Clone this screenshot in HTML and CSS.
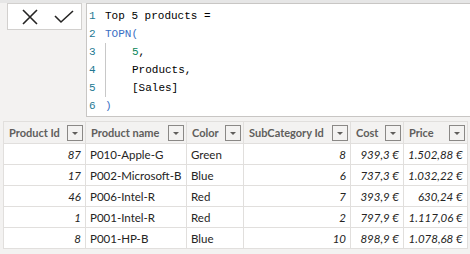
FILE: index.html
```html
<!DOCTYPE html>
<html>

<head>
    <title>TOPN query</title>
    <link rel="stylesheet" href="styles.css">
</head>

<body>
    <div class="top">
        <div class="buttons">
            <svg class="icon" width="16" height="16" viewBox="0 0 16 16">
                <path d="M1 1 L15 15 M15 1 L1 15" stroke="#252423" stroke-width="1.6" fill="none"/>
            </svg>
            <svg class="icon" width="20" height="14" viewBox="0 0 20 14">
                <path d="M1 6 L7 12 L19 1" stroke="#252423" stroke-width="1.6" fill="none"/>
            </svg>
        </div>
        <div class="editor">
            <div class="line"><span class="num">1</span><span>Top 5 products =</span></div>
            <div class="line"><span class="num">2</span><span class="fn">TOPN(</span></div>
            <div class="line"><span class="num">3</span><span class="guide"></span><span class="lit">5</span><span>,</span></div>
            <div class="line"><span class="num">4</span><span class="guide"></span><span>Products,</span></div>
            <div class="line"><span class="num">5</span><span class="guide"></span><span>[Sales]</span></div>
            <div class="line"><span class="num">6</span><span class="fn">)</span></div>
        </div>
    </div>

    <table class="grid">
        <thead>
            <tr>
                <th class="c1"><div class="head">Product Id<span class="drop"></span></div></th>
                <th class="c2"><div class="head">Product name<span class="drop"></span></div></th>
                <th class="c3"><div class="head">Color<span class="drop"></span></div></th>
                <th class="c4"><div class="head">SubCategory Id<span class="drop"></span></div></th>
                <th class="c5"><div class="head">Cost<span class="drop"></span></div></th>
                <th class="c6"><div class="head">Price<span class="drop"></span></div></th>
            </tr>
        </thead>
        <tbody>
            <tr>
                <td class="n">87</td><td>P010-Apple-G</td><td>Green</td>
                <td class="n">8</td><td class="n">939,3 €</td><td class="n">1.502,88 €</td>
            </tr>
            <tr>
                <td class="n">17</td><td>P002-Microsoft-B</td><td>Blue</td>
                <td class="n">6</td><td class="n">737,3 €</td><td class="n">1.032,22 €</td>
            </tr>
            <tr>
                <td class="n">46</td><td>P006-Intel-R</td><td>Red</td>
                <td class="n">7</td><td class="n">393,9 €</td><td class="n">630,24 €</td>
            </tr>
            <tr>
                <td class="n">1</td><td>P001-Intel-R</td><td>Red</td>
                <td class="n">2</td><td class="n">797,9 €</td><td class="n">1.117,06 €</td>
            </tr>
            <tr>
                <td class="n">8</td><td>P001-HP-B</td><td>Blue</td>
                <td class="n">10</td><td class="n">898,9 €</td><td class="n">1.078,68 €</td>
            </tr>
        </tbody>
    </table>
</body>

</html>
```

FILE: styles.css
```css
html,
body {
    margin: 0;
    padding: 0;
}

body {
    width: 470px;
    height: 254px;
    overflow: hidden;
    background-color: #f3f2f1;
    font-family: Lato, "Open Sans", sans-serif;
    color: #252423;
}

.top {
    display: flex;
    align-items: flex-start;
    height: 118px;
    padding-top: 3px;
    box-sizing: border-box;
    background: linear-gradient(#e6e6e6, #e6e6e6) top / 100% 3px no-repeat, #f3f2f1;
}

.buttons {
    display: flex;
    align-items: center;
    gap: 16px;
    margin-left: 7px;
    width: 75px;
    height: 27px;
    padding-left: 14px;
    box-sizing: border-box;
    background-color: #fff;
    border: 1px solid #d2d0ce;
}

.editor {
    flex: 1;
    height: 114px;
    margin-left: 4px;
    padding: 3px 0 0 2px;
    box-sizing: border-box;
    background-color: #fff;
    border: 1px solid #c8c6c4;
    border-right: none;
    font-family: "Liberation Mono", monospace;
    font-size: 11px;
    color: #000;
}

.line {
    display: flex;
    align-items: center;
    height: 18px;
    white-space: pre;
}

.num {
    width: 16px;
    color: #237893;
}

.fn {
    color: #3a6fc4;
}

.lit {
    color: #098658;
}

.guide {
    width: 27px;
    height: 18px;
    box-sizing: border-box;
    border-left: 1px solid #c8c8c8;
}

.grid {
    margin: 3px 0 0 3px;
    border-collapse: collapse;
    table-layout: fixed;
    font-size: 11.5px;
}

.c1 { width: 81px; }
.c2 { width: 100px; }
.c3 { width: 56px; }
.c4 { width: 106px; }
.c5 { width: 52px; }
.c6 { width: 57px; }

.grid th {
    height: 21px;
    padding: 0;
    border: 1px solid #e1dfdd;
    background-color: #f3f2f1;
    font-size: 11px;
    font-weight: 700;
    color: #605e5c;
    text-align: left;
}

.head {
    display: flex;
    align-items: center;
    justify-content: space-between;
    padding: 0 2px 0 5px;
    white-space: nowrap;
}

.drop {
    position: relative;
    width: 16px;
    height: 16px;
    box-sizing: border-box;
    border: 1px solid #8a8886;
    flex-shrink: 0;
}

.drop::after {
    content: "";
    position: absolute;
    left: 4px;
    top: 6px;
    border-left: 3px solid transparent;
    border-right: 3px solid transparent;
    border-top: 3px solid #605e5c;
}

.grid td {
    height: 20px;
    padding: 0 4px;
    border: 1px solid #e1dfdd;
    background-color: #fff;
    white-space: nowrap;
    overflow: hidden;
}

.grid td.n {
    text-align: right;
    font-style: italic;
}
```
